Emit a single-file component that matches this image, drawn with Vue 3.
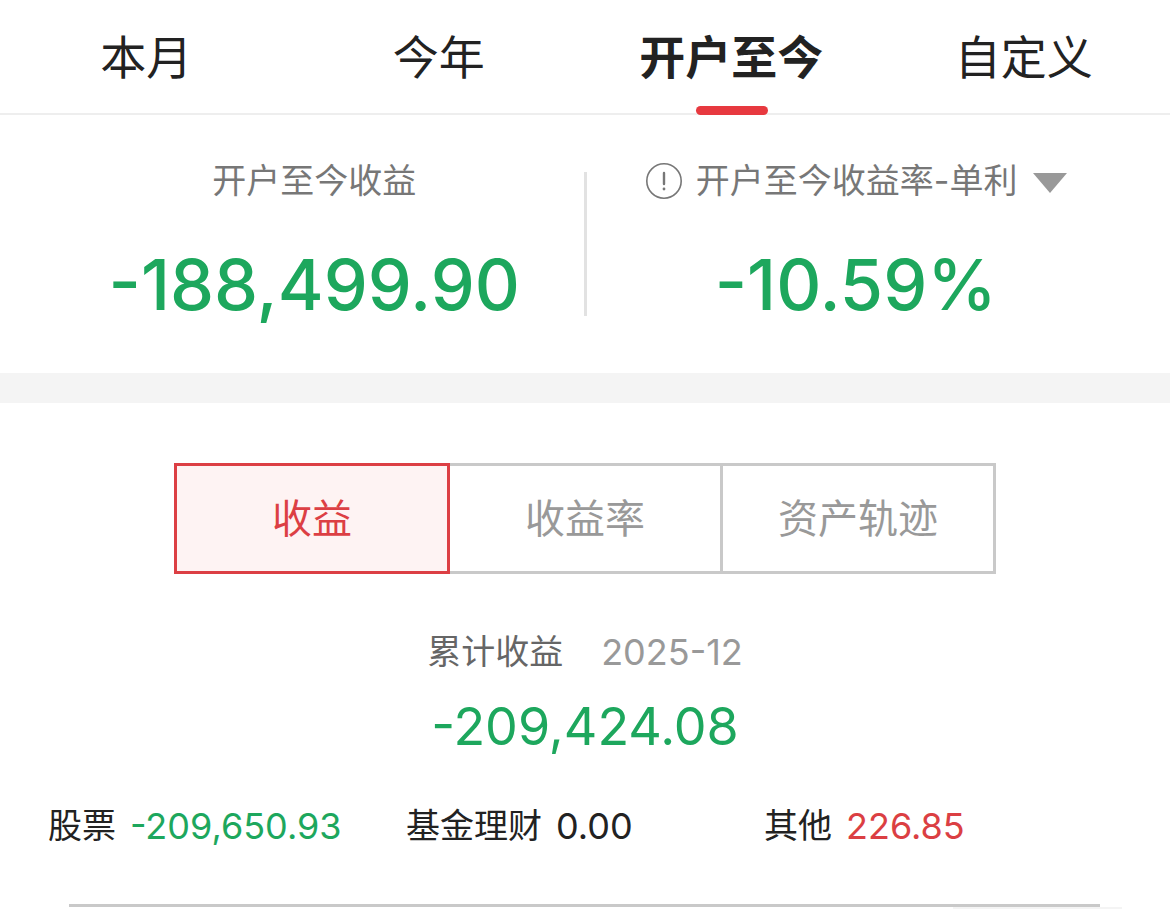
<script setup>
import { ref } from 'vue';

const tabs = ['本月', '今年', '开户至今', '自定义']
const current_tab = ref('开户至今')

const modes = ['收益', '收益率', '资产轨迹']
const current_mode = ref('收益')

const rate_type = ref('单利') // 收益率算法

const parts = [ // 累计收益的构成
  { name: '股票', value: '-209,650.93' },
  { name: '基金理财', value: '0.00' },
  { name: '其他', value: '226.85' },
]

function sign_class(value) { // 绿跌红涨
  const n = parseFloat(value.replace(/,/g, ''))
  return { down: n < 0, up: n > 0 }
}
</script>

<template>
  <main class="page">
    <nav class="tabs">
      <button v-for="tab in tabs" :key="tab" type="button" class="tab" :class="{ active: tab == current_tab }"
        @click="current_tab = tab">{{ tab }}</button>
    </nav>

    <section class="summary">
      <div class="summary-item">
        <div class="label">开户至今收益</div>
        <div class="amount down">-188,499.90</div>
      </div>
      <div class="divider"></div>
      <div class="summary-item">
        <div class="label">
          <button type="button" class="info" aria-label="说明">
            <svg width="38" height="38" viewBox="0 0 38 38" fill="none">
              <circle cx="19" cy="19" r="17.2" stroke="#777" stroke-width="1.6" />
              <path d="M19 11v11" stroke="#777" stroke-width="2.4" stroke-linecap="round" />
              <circle cx="19" cy="27" r="1.4" fill="#777" />
            </svg>
          </button>
          <select v-model="rate_type" class="rate-type" aria-label="收益率算法">
            <option value="单利">开户至今收益率-单利</option>
            <option value="复利">开户至今收益率-复利</option>
          </select>
          <svg class="arrow" width="34" height="24" viewBox="0 0 34 24">
            <path d="M0 4h34L17 24z" fill="#999" />
          </svg>
        </div>
        <div class="amount down">-10.59%</div>
      </div>
    </section>

    <section class="detail">
      <div class="modes">
        <button v-for="mode in modes" :key="mode" type="button" class="mode" :class="{ active: mode == current_mode }"
          @click="current_mode = mode">{{ mode }}</button>
      </div>

      <div class="total-title">
        <span>累计收益</span>
        <span class="month">2025-12</span>
      </div>
      <div class="total down">-209,424.08</div>

      <div class="parts">
        <div v-for="part in parts" :key="part.name" class="part">
          <span>{{ part.name }}</span>
          <span class="part-value" :class="sign_class(part.value)">{{ part.value }}</span>
        </div>
      </div>

      <div class="chart-top"></div>
      <div class="chart-tag"></div>
    </section>
  </main>
</template>

<style>
body {
  margin: 0;
  background: #fff;
}
</style>

<style scoped>
.page {
  font-family: Inter, "Noto Sans CJK SC", sans-serif;
  color: #222;
  background: #fff;
}

button,
select {
  margin: 0;
  padding: 0;
  border: 0;
  border-radius: 0;
  background: none;
  font: inherit;
  color: inherit;
  cursor: pointer;
}

.tabs {
  display: flex;
  border-bottom: 2px solid #eee;
}

.tab {
  position: relative;
  flex: 1;
  padding: 25px 0 24px;
  font-size: 46px;
  line-height: 64px;
}

.tab.active {
  font-weight: 700;
}

.tab.active::after {
  content: '';
  position: absolute;
  left: 50%;
  bottom: -2px;
  width: 72px;
  height: 9px;
  margin-left: -35px;
  border-radius: 5px;
  background: #e7393f;
}

.summary {
  display: flex;
  padding: 42px 45px 45px;
  border-bottom: 30px solid #f4f4f4;
}

.summary-item {
  flex: 1;
  text-align: center;
}

.divider {
  width: 3px;
  margin: 15px 0 12px;
  background: #e2e2e2;
}

.label {
  display: flex;
  align-items: center;
  justify-content: center;
  font-size: 34px;
  line-height: 48px;
  color: #777;
}

.info {
  display: flex;
  margin-right: 13px;
}

.rate-type {
  appearance: none;
  outline: none;
}

.arrow {
  margin-left: 15px;
}

.amount {
  margin-top: 37px;
  font-size: 70px;
  font-weight: 500;
  line-height: 86px;
}

.down {
  color: #1da75d;
}

.up {
  color: #db3f43;
}

.modes {
  display: flex;
  margin: 60px 174px 0;
}

.mode {
  position: relative;
  flex: 1;
  padding: 24px 0;
  border: 3px solid #c9c9c9;
  font-size: 40px;
  line-height: 57px;
  color: #999;
}

.mode + .mode {
  margin-left: -3px;
}

.mode.active {
  z-index: 1;
  border-color: #dc3f44;
  background: #fef3f3;
  color: #dc3f44;
}

.total-title {
  display: flex;
  justify-content: center;
  gap: 38px;
  margin-top: 54px;
  font-size: 34px;
  line-height: 48px;
  color: #666;
}

.month {
  font-size: 36px;
  color: #999;
}

.total {
  margin-top: 19px;
  font-size: 52px;
  line-height: 64px;
  text-align: center;
}

.parts {
  display: flex;
  margin: 43px 48px 0;
  font-size: 34px;
  line-height: 48px;
}

.part {
  display: flex;
  flex: 1;
  gap: 14px;
  white-space: nowrap;
}

.part-value {
  font-size: 36px;
}

.chart-top {
  height: 3px;
  margin: 54px 70px 0 69px;
  background: #c9c9c9;
}

.chart-tag {
  width: 169px;
  height: 2px;
  margin: 0 48px 0 auto;
  background: #f4f4f4;
}
</style>
